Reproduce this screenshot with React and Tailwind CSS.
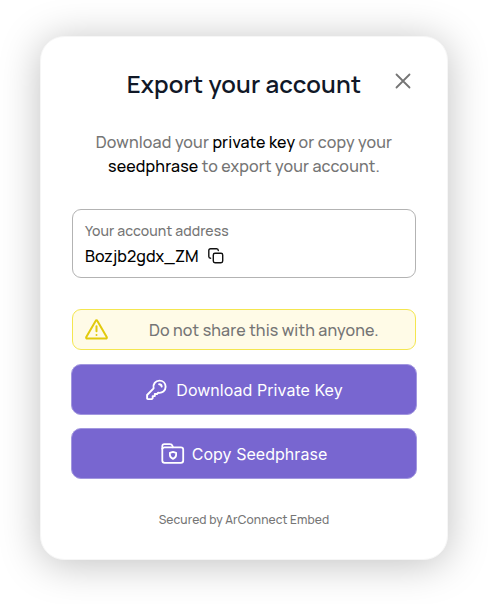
import React from "react";

function CloseIcon() {
  return (
    <svg width="16" height="16" viewBox="0 0 16 16" fill="none" stroke="#757575" strokeWidth="1.8" strokeLinecap="round">
      <path d="M1.5 1.5 14.5 14.5M14.5 1.5 1.5 14.5" />
    </svg>
  );
}

function CopyIcon() {
  return (
    <svg width="16" height="16" viewBox="0 0 16 16" fill="none" stroke="#111" strokeWidth="1.4" strokeLinecap="round" strokeLinejoin="round">
      <rect x="5.3" y="5.3" width="9.4" height="9.4" rx="1.7" />
      <path d="M2.6 10.3C1.6 10.3 .8 9.6 .8 8.6V2.6C.8 1.6 1.6.8 2.6.8h6c1 0 1.7.8 1.7 1.8" />
    </svg>
  );
}

function WarningIcon() {
  return (
    <svg width="24" height="22" viewBox="0 0 24 22" fill="none" stroke="#e2ca0c" strokeWidth="2" strokeLinecap="round" strokeLinejoin="round">
      <path d="M10.6 1.9a1 1 0 0 1 1.8 0l9.3 16.2a1 1 0 0 1-.9 1.5H2.2a1 1 0 0 1-.9-1.5Z" />
      <path d="M11.5 7.2v5.1M11.5 15.9v.1" />
    </svg>
  );
}

function KeyIcon() {
  return (
    <svg width="22" height="22" viewBox="0 0 22 22" fill="none" stroke="white" strokeWidth="1.9" strokeLinecap="round" strokeLinejoin="round">
      <path d="M8.6 9.3C7.7 5 10.5 1.6 14.4 1.6c3.6 0 6.2 2.6 6.2 6.1 0 4.2-3.4 6.7-7.4 6l-1.2 1.3H9.8v2.1H7.7v2.1l-.9.9H2.9c-.5 0-.8-.3-.8-.8v-3.3Z" />
      <path d="M14.1 5.2c1.4 0 2.5 1 2.6 2.4" />
    </svg>
  );
}

function FolderShieldIcon() {
  return (
    <svg width="24" height="22" viewBox="0 0 24 22" fill="none" stroke="white" strokeWidth="1.8" strokeLinecap="round" strokeLinejoin="round">
      <path d="M1.3 5.3V3.2c0-1.3.8-2.1 2.1-2.1h5.5c1.3 0 2.1.5 2.5 1.7l.5 1.5h8c1.4 0 2.3.9 2.3 2.3v11c0 1.4-.9 2.3-2.3 2.3H3.7c-1.4 0-2.4-.9-2.4-2.3Z" />
      <path d="M1.3 5.7c.5-.9 1.2-1.4 2.3-1.4h8.3" />
      <path d="m12 8.8 3.1 1v2.3c0 1.9-1.2 2.9-3.1 3.7-1.9-.8-3.1-1.8-3.1-3.7V9.8Z" />
    </svg>
  );
}

export default function App() {
  return (
    <main className="flex h-[604px] w-[488px] flex-col items-center bg-white pt-[36px] font-['Manrope','Inter',sans-serif] text-[#757575]">
      <section className="flex h-[524px] w-[408px] flex-col rounded-[24px] border border-[#f6f6f6] bg-white px-[31px] pt-[30px] shadow-[0_4px_40px_rgba(0,0,0,0.25)]">
        <header className="grid grid-cols-[24px_1fr_24px] items-center">
          <span />
          <h1 className="text-center text-[24px] leading-[33px] font-semibold tracking-[0.19px] whitespace-nowrap text-[#111827]">
            Export your account
          </h1>
          <button className="mb-[6px] flex justify-center pr-[2px]" aria-label="Close">
            <CloseIcon />
          </button>
        </header>
        <div className="mt-[30px] flex flex-col items-center text-[16px] leading-6 font-medium tracking-[0.15px] whitespace-nowrap">
          <p>
            Download your <span className="text-black">private key</span> or copy your
          </p>
          <p>
            <span className="text-black">seedphrase</span> to export your account.
          </p>
        </div>
        <div className="mt-[31px] h-[69px] rounded-[9px] border border-[#b3b3b3] px-[12px] pt-[10px]">
          <p className="text-[14px] leading-[21px] font-medium tracking-[0.1px]">Your account address</p>
          <div className="mt-[3px] flex items-center gap-[9px]">
            <span className="text-[16px] leading-6 font-medium tracking-[0.08px] text-black">Bozjb2gdx_ZM</span>
            <CopyIcon />
          </div>
        </div>
        <div className="mt-[31px] flex h-[41px] items-center rounded-[9px] border border-[#f4e64f] bg-[#fffbe7] pl-[12px]">
          <WarningIcon />
          <p className="ml-[40px] text-[16px] font-medium tracking-[0.14px] whitespace-nowrap">Do not share this with anyone.</p>
        </div>
        <div className="-mx-[1px] mt-[14px] flex flex-col gap-[13px] font-['Inter',sans-serif] text-[16px] text-white">
          <button className="flex h-[51px] items-center justify-center gap-[9px] rounded-[10px] border border-[#a297df] bg-[#7866d0]">
            <KeyIcon />
            <span className="tracking-[0.04px] whitespace-nowrap">Download Private Key</span>
          </button>
          <button className="flex h-[51px] items-center justify-center gap-[7px] rounded-[10px] border border-[#a297df] bg-[#7866d0]">
            <FolderShieldIcon />
            <span className="tracking-[0.04px] whitespace-nowrap">Copy Seedphrase</span>
          </button>
        </div>
        <footer className="mt-[32px] text-center text-[12px] leading-[18px] font-medium tracking-[0.11px]">Secured by ArConnect Embed</footer>
      </section>
    </main>
  );
}
